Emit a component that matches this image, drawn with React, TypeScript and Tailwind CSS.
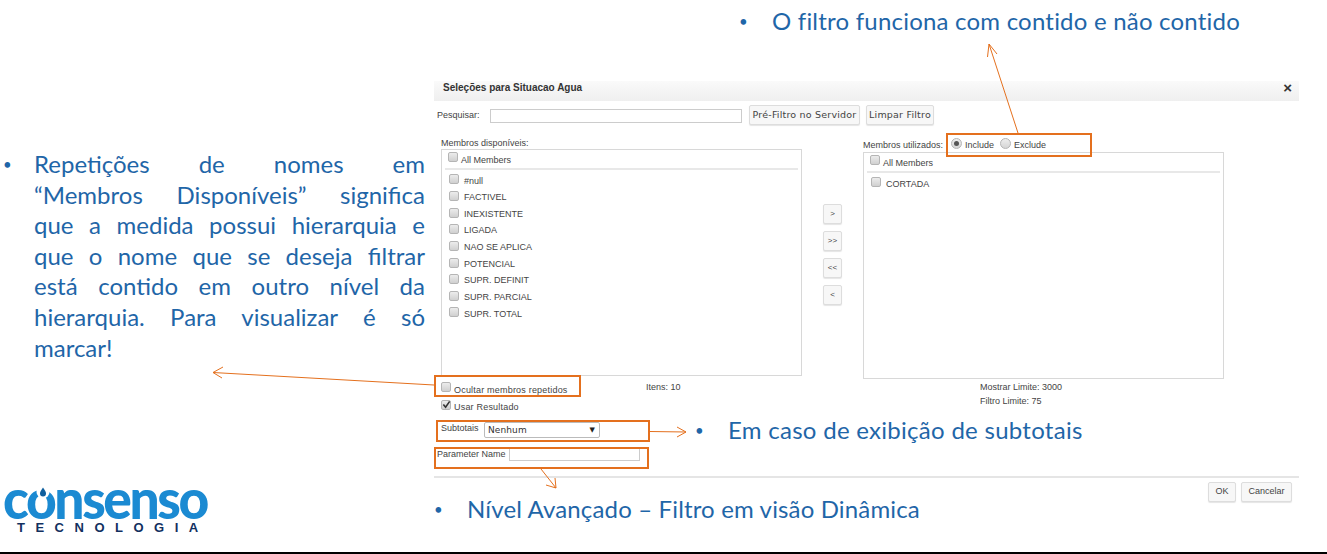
const orange = "#e4701e";

function Check({ checked = false, className = "" }: { checked?: boolean; className?: string }) {
  return (
    <span className={`relative inline-block w-[10px] h-[10px] shrink-0 rounded-[2px] border border-[#b5b5b5] bg-gradient-to-b from-[#ececec] to-[#d0d0d0] ${className}`}>
      {checked && (
        <svg viewBox="0 0 10 10" className="absolute left-0 top-[-1px] w-[9px] h-[9px]">
          <path d="M1.5 5 L4 8 L8.5 1.5" fill="none" stroke="#333" strokeWidth="1.8" />
        </svg>
      )}
    </span>
  );
}

function Radio({ checked = false }: { checked?: boolean }) {
  return (
    <span className="flex items-center justify-center w-[11px] h-[11px] -mt-[5px] rounded-full border border-[#b5b5b5] bg-gradient-to-b from-[#eee] to-[#d5d5d5]">
      {checked && <span className="w-[5px] h-[5px] rounded-full bg-[#555]" />}
    </span>
  );
}

function Btn({ children, className = "" }: { children: React.ReactNode; className?: string }) {
  return (
    <div className={`flex items-center justify-center h-[20px] rounded-[2px] border border-[#ddd] bg-[#f7f7f7] shadow-[0_1px_1px_#e5e5e5] text-[#444] ${className}`}>
      {children}
    </div>
  );
}

function Bullet({ children, className = "" }: { children: React.ReactNode; className?: string }) {
  return (
    <div className={`flex items-center h-[30px] font-['Lato',sans-serif] text-[24px] text-[#1f66a8] whitespace-nowrap ${className}`}>
      <span className="w-[33px] text-[15px]">•</span>
      {children}
    </div>
  );
}

const para = [
  "Repetições de nomes em",
  "“Membros Disponíveis” significa",
  "que a medida possui hierarquia e",
  "que o nome que se deseja filtrar",
  "está contido em outro nível da",
  "hierarquia. Para visualizar é só",
];

const members = ["#null", "FACTIVEL", "INEXISTENTE", "LIGADA", "NAO SE APLICA", "POTENCIAL", "SUPR. DEFINIT", "SUPR. PARCIAL", "SUPR. TOTAL"];

function MemberBox({ items }: { items: string[] }) {
  return (
    <div className="h-[227px] border border-[#d8d8d8] text-[9px] text-[#444]">
      <div className="flex items-center h-[20px] mx-[3px] pl-[3px] gap-[3px] border-b-2 border-[#e8e8e8]">
        <Check className="-mt-[5px]" />
        <span className="mt-[3px]">All Members</span>
      </div>
      <div className="pt-[3px]">
        {items.map((m) => (
          <div key={m} className="flex items-center h-[16.65px] pl-[7px] gap-[5px]">
            <Check className="-mt-[4px]" />
            <span>{m}</span>
          </div>
        ))}
      </div>
    </div>
  );
}

export default function App() {
  return (
    <div className="relative w-[1327px] h-[554px] overflow-hidden bg-white font-['Liberation_Sans',sans-serif]">
      <div className="flex h-[552px]">
        {/* Left notes + logo */}
        <aside className="w-[434px] shrink-0 flex flex-col justify-between pl-[3px] pt-[149px] pb-[17px]">
          <div className="flex font-['Lato',sans-serif] text-[24px] leading-[30.6px] text-[#1f66a8]">
            <span className="w-[31px] text-[15px]">•</span>
            <div className="w-[391px]">
              {para.map((l) => (
                <div key={l} className="text-justify [text-align-last:justify]">{l}</div>
              ))}
              <div>marcar!</div>
            </div>
          </div>
          <div className="relative w-[210px] h-[48px]">
            <div className="h-[34px] -mt-[6px] mb-[6px] origin-left scale-x-[0.97] font-['Lato',sans-serif] font-black text-[55px] leading-[34px] tracking-[-2.5px] text-[#1b8ad2]">consenso</div>
            <svg viewBox="0 0 14 14" className="absolute left-[33px] top-[-1px] w-[14px] h-[14px]">
              <circle cx="7" cy="6" r="6.5" fill="#fff" />
              <path d="M7 1.5 C9 4.5 10 6 10 7.5 A3 3 0 0 1 4 7.5 C4 6 5 4.5 7 1.5 Z" fill="#0f5f9e" />
            </svg>
            <div className="ml-[14px] mt-[1px] font-bold text-[13px] leading-[14px] tracking-[10.5px] text-[#12305f]">TECNOLOGIA</div>
          </div>
        </aside>

        {/* Dialog column */}
        <main className="w-[865px] shrink-0">
          <div className="h-[81px] pt-[6px] pl-[305px]">
            <Bullet className="tracking-[0.21px]">O filtro funciona com contido e não contido</Bullet>
          </div>

          <div className="flex items-center justify-between h-[20px] pb-[8px] pl-[9px] pr-[7px] bg-gradient-to-b from-[#fafafa] to-[#efefef] text-[10px] font-bold text-[#333]">
            <span>Seleções para Situacao Agua</span>
            <span className="text-[15px] leading-none">×</span>
          </div>

          <div className="flex items-center h-[20px] mt-[4px] pl-[3px] text-[9px] text-[#444]">
            <span className="w-[53px] mt-[2px]">Pesquisar:</span>
            <div className="w-[252px] h-[14px] mt-[2px] border border-[#ccc]" />
            <Btn className="w-[111px] ml-[7px] font-['DejaVu_Sans',sans-serif] text-[9.5px] tracking-[0.2px]">Pré-Filtro no Servidor</Btn>
            <Btn className="w-[68px] ml-[6px] font-['DejaVu_Sans',sans-serif] text-[9.5px] tracking-[0.2px]">Limpar Filtro</Btn>
          </div>

          <div className="flex h-[275px] mt-[12px] pl-[7px] text-[9px] text-[#444]">
            <div className="w-[361px]">
              <div className="h-[12px] leading-[12px]">Membros disponíveis:</div>
              <MemberBox items={members} />
              <div className="flex h-[12px] mt-[6px] gap-[3px]">
                <Check />
                <span className="w-[189px] mt-[2px] tracking-[0.2px]">Ocultar membros repetidos</span>
                <span className="-mt-[1px]">Itens: 10</span>
              </div>
              <div className="flex h-[12px] mt-[6px] gap-[3px]">
                <Check checked />
                <span className="mt-[1px] tracking-[0.2px]">Usar Resultado</span>
              </div>
            </div>

            <div className="w-[61px] pl-[21px] pt-[67px] flex flex-col gap-[7px]">
              <Btn className="w-[19px] text-[8px]">&gt;</Btn>
              <Btn className="w-[19px] text-[8px]">&gt;&gt;</Btn>
              <Btn className="w-[19px] text-[8px]">&lt;&lt;</Btn>
              <Btn className="w-[19px] text-[8px]">&lt;</Btn>
            </div>

            <div className="w-[361px]">
              <div className="flex items-center h-[15px] pt-[3px] gap-[3px]">
                <span className="w-[85px]">Membros utilizados:</span>
                <Radio checked />
                <span className="mr-[3px]">Include</span>
                <Radio />
                <span>Exclude</span>
              </div>
              <MemberBox items={["CORTADA"]} />
              <div className="pl-[117px] pt-[1px] leading-[14px]">
                <div>Mostrar Limite: 3000</div>
                <div>Filtro Limite: 75</div>
              </div>
            </div>
          </div>

          <div className="flex items-center h-[16px] mt-[10px] pl-[7px] text-[9px] text-[#444]">
            <span className="w-[43px] -mt-[2px]">Subtotais</span>
            <div className="flex items-center justify-between w-[116px] h-[16px] pl-[3px] pr-[4px] border border-[#bbb] rounded-[2px] font-['DejaVu_Sans',sans-serif] text-[#333]">
              <span className="mt-[2px] tracking-[0.1px]">Nenhum</span>
              <span className="text-[7px] text-[#222]">▼</span>
            </div>
            <Bullet className="ml-[95px] tracking-[0.28px]">Em caso de exibição de subtotais</Bullet>
          </div>

          <div className="flex items-center h-[13px] mt-[10px] pl-[3px] text-[9px] text-[#444]">
            <span className="w-[72px]">Parameter Name</span>
            <div className="w-[131px] h-[13px] border border-[#ccc]" />
          </div>

          <div className="h-[2px] mt-[15px] bg-[#e5e5e5]" />

          <div className="flex items-start justify-between pr-[7px] pt-[4px]">
            <Bullet className="mt-[12px] tracking-[0.15px]">Nível Avançado – Filtro em visão Dinâmica</Bullet>
            <div className="flex gap-[5px] text-[9px]">
              <Btn className="w-[28px]">OK</Btn>
              <Btn className="w-[51px]">Cancelar</Btn>
            </div>
          </div>
        </main>
      </div>
      <div className="h-[2px] bg-black" />

      {/* Orange highlight boxes */}
      <div className="absolute left-[946px] top-[133px] w-[146px] h-[24px] border-[2.5px] border-[#e4701e]" />
      <div className="absolute left-[434px] top-[375px] w-[147px] h-[22px] border-[2.5px] border-[#e4701e]" />
      <div className="absolute left-[436px] top-[420px] w-[214px] h-[22px] border-[2.5px] border-[#e4701e]" />
      <div className="absolute left-[434px] top-[447px] w-[215px] h-[22px] border-[2.5px] border-[#e4701e]" />

      {/* Callout arrows */}
      <svg className="absolute left-0 top-0 w-[1327px] h-[554px] pointer-events-none" viewBox="0 0 1327 554" fill="none" stroke={orange} strokeWidth="1">
        <path d="M1018 133 L989 44 M989 44 L987.5 57 M989 44 L997 54" />
        <path d="M434 385 L213 372.5 M213 372.5 L223 367 M213 372.5 L222 378" />
        <path d="M650 431.5 L686 432 M686 432 L677 427 M686 432 L677 437" />
        <path d="M541 469 L556 488 M556 488 L546 485 M556 488 L555 478" />
      </svg>
    </div>
  );
}
